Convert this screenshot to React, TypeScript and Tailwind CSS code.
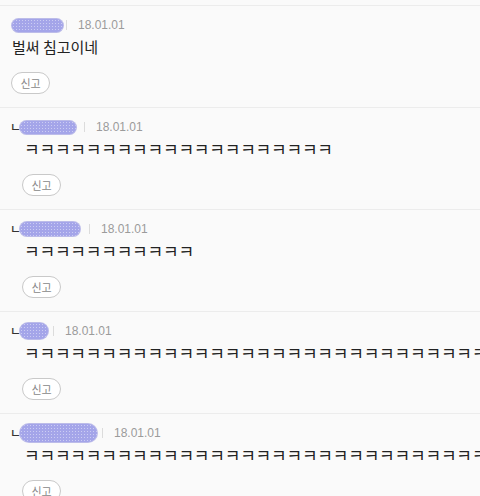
const comments = [
  { reply: false, nameW: 51, nameH: 13, sepGap: 3, text: '벌써 침고이네' },
  { reply: true, nameW: 56, nameH: 13, sepGap: 8, text: 'ㅋ'.repeat(20) },
  { reply: true, nameW: 60, nameH: 14, sepGap: 9, text: 'ㅋ'.repeat(11) },
  { reply: true, nameW: 28, nameH: 16, sepGap: 5, text: 'ㅋ'.repeat(40) },
  { reply: true, nameW: 77, nameH: 18, sepGap: 5, text: 'ㅋ'.repeat(40) },
];

function NameBlur({ w, h }: { w: number; h: number }) {
  // stands in for the scribbled-over nickname
  return (
    <span
      className="inline-block rounded-full bg-[#a4a5e9] bg-[radial-gradient(circle,#ffffff70_0.8px,transparent_1px)] bg-[length:3px_3px] ring-1 ring-[#9293dd]/60"
      style={{ width: w, height: h }}
    />
  );
}

export default function App() {
  return (
    <div className="min-h-[496px] w-[480px] overflow-hidden bg-[#fafafa] pt-[5px] font-['Liberation_Sans','Noto_Sans_CJK_KR',sans-serif]">
      {comments.map((c, i) => (
        <div key={i} className="border-t border-[#ececec] pb-[13px] pt-[11px]">
          <div className={`flex h-[16px] items-center ${c.reply ? 'pl-[10px]' : 'pl-[12px]'}`}>
            {c.reply && (
              <span className="w-[10px] font-['Noto_Sans_CJK_KR',sans-serif] text-[12px] font-medium leading-none text-[#333]">ㄴ</span>
            )}
            <NameBlur w={c.nameW} h={c.nameH} />
            <span className="h-[10px] w-px bg-[#dcdcdc]" style={{ marginLeft: c.sepGap }} />
            <span className="ml-[11px] text-[12px] leading-none text-[#9b9b9b]">18.01.01</span>
          </div>
          <div
            className={`mt-[4px] h-[20px] whitespace-nowrap font-['Noto_Sans_CJK_KR',sans-serif] leading-[20px] text-[#222] ${c.reply ? 'pl-[24px] text-[17px] tracking-[-0.2px]' : 'pl-[12px] text-[15px]'}`}
          >
            {c.text}
          </div>
          <div className={`mt-[15px] ${c.reply ? 'pl-[22px]' : 'pl-[11px]'}`}>
            <button className="flex h-[22px] w-[39px] items-center justify-center rounded-full border border-[#c9c9c9] bg-white font-['Noto_Sans_CJK_KR',sans-serif] text-[11px] text-[#888]">
              신고
            </button>
          </div>
        </div>
      ))}
    </div>
  );
}
